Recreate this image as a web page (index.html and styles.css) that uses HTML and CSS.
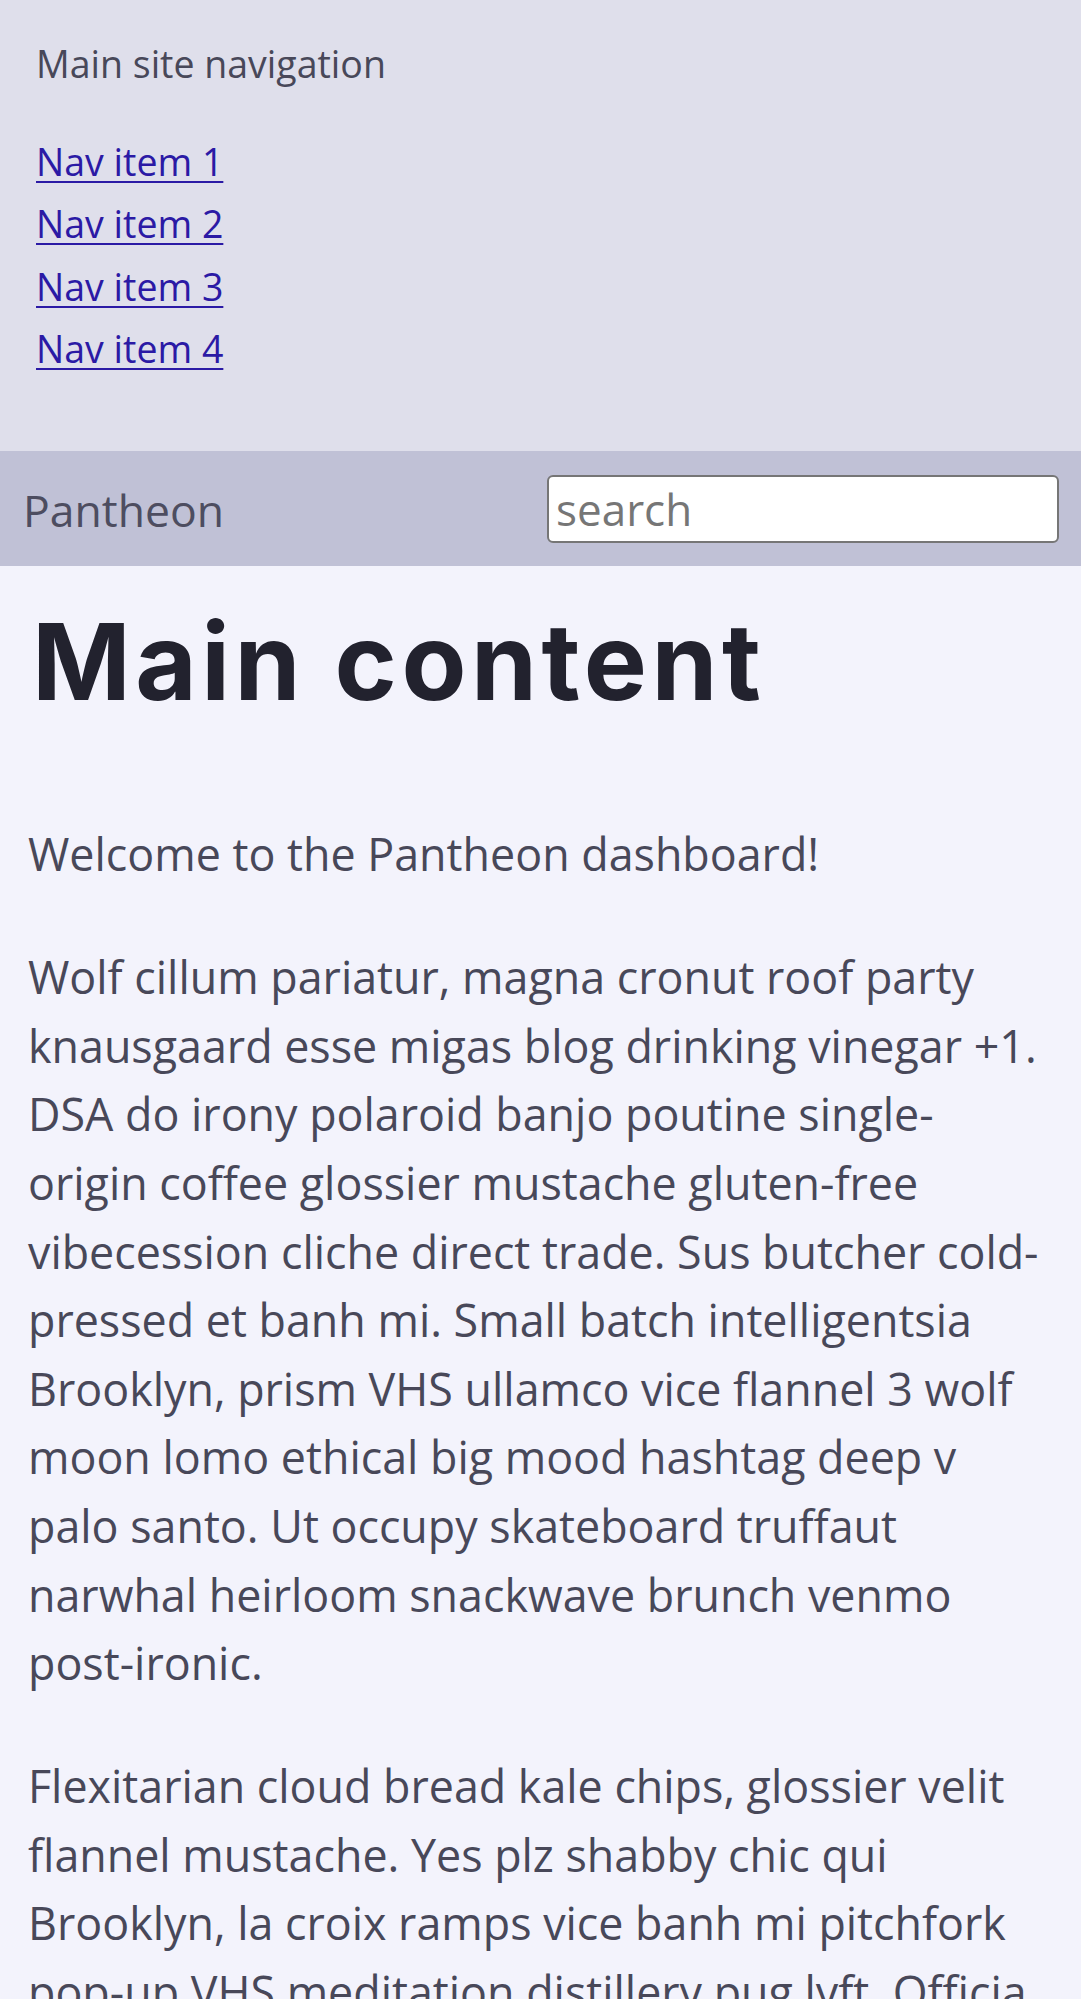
FILE: index.html
```html
<!DOCTYPE html>
<html lang="en">
<head>
<meta charset="utf-8">
<title>Pantheon</title>
<link rel="stylesheet" href="styles.css">
</head>
<body>
<nav class="site-nav">
  <p class="nav-title">Main site navigation</p>
  <ul class="nav-list">
    <li><a href="#">Nav item 1</a></li>
    <li><a href="#">Nav item 2</a></li>
    <li><a href="#">Nav item 3</a></li>
    <li><a href="#">Nav item 4</a></li>
  </ul>
</nav>
<header class="topbar">
  <span class="brand">Pantheon</span>
  <input class="search" type="search" placeholder="search">
</header>
<main class="content">
  <h1 class="title">Main content</h1>
  <p>Welcome to the Pantheon dashboard!</p>
  <p>Wolf cillum pariatur, magna cronut roof party knausgaard esse migas blog drinking vinegar +1. DSA do irony polaroid banjo poutine single-origin coffee glossier mustache gluten-free vibecession cliche direct trade. Sus butcher cold-pressed et banh mi. Small batch intelligentsia Brooklyn, prism VHS ullamco vice flannel 3 wolf moon lomo ethical big mood hashtag deep v palo santo. Ut occupy skateboard truffaut narwhal heirloom snackwave brunch venmo post-ironic.</p>
  <p>Flexitarian cloud bread kale chips, glossier velit flannel mustache. Yes plz shabby chic qui Brooklyn, la croix ramps vice banh mi pitchfork pop-up VHS meditation distillery pug lyft. Officia tumeric kombucha, vinyl pickled chambray wayfarers enamel pin aesthetic.</p>
</main>
</body>
</html>
```
FILE: styles.css
```css
* { box-sizing: border-box; }
html, body { margin: 0; padding: 0; }
body {
  font-family: "Open Sans", "Noto Sans", sans-serif;
  color: #484859;
  background: #f3f3fc;
}
.site-nav {
  background: #dfdfeb;
  padding: 36px 36px 70px;
  font-size: 37.5px;
}
.nav-title {
  margin: 0 0 39.5px;
  line-height: 55px;
}
.nav-list {
  list-style: none;
  margin: 0;
  padding: 0;
}
.nav-list li {
  line-height: 62.6px;
}
.nav-list a {
  color: #2b1aa5;
  text-decoration: underline;
  text-decoration-thickness: 2px;
  text-underline-offset: 5px;
}
.topbar {
  background: #c0c1d6;
  display: flex;
  align-items: center;
  justify-content: space-between;
  padding: 24px 22px 23px 23px;
}
.brand {
  font-size: 44.5px;
  line-height: 1;
  color: #4d4d60;
  padding-top: 2px;
}
.search {
  width: 512px;
  height: 68px;
  font-family: "Open Sans", "Noto Sans", sans-serif;
  font-size: 44px;
  padding: 0 7px;
  border: 2px solid #767676;
  border-radius: 6px;
  background: #fff;
  color: #333;
  -webkit-appearance: none;
  appearance: none;
  outline: none;
}
.search::placeholder { color: #767676; }
.content {
  padding: 0 28px;
}
.title {
  font-family: "Inter", "DejaVu Sans", sans-serif;
  font-weight: 700;
  font-size: 106px;
  line-height: 1.2;
  letter-spacing: 4.5px;
  color: #22222e;
  margin: 0 0 95px 4px;
  padding-top: 32px;
}
.content p {
  font-size: 44.8px;
  line-height: 68.6px;
  margin: 0 0 54.5px;
}
```
